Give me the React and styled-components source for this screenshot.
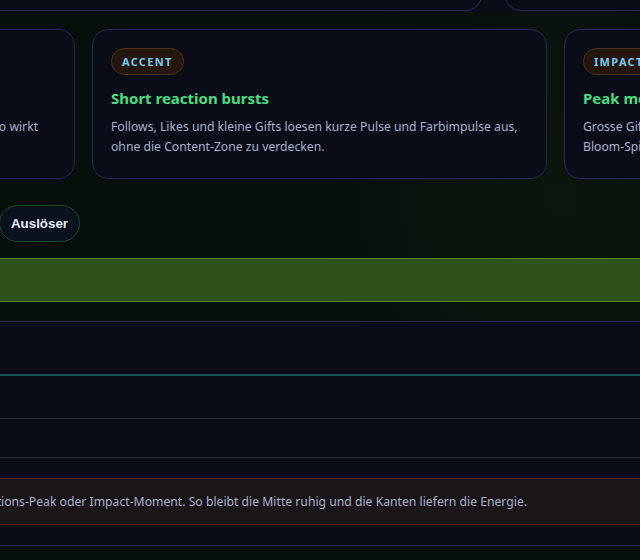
import React from "react";
import styled, { createGlobalStyle } from "styled-components";

const Global = createGlobalStyle`
  html, body { margin: 0; padding: 0; background: #070f0a; }
  body { overflow: hidden; font-family: "Noto Sans", "Open Sans", sans-serif; }
  * { box-sizing: border-box; }
`;

const Stage = styled.div`
  width: 640px;
  height: 560px;
  overflow: hidden;
  background:
    radial-gradient(circle at 560px 200px, rgba(30, 60, 30, 0.16), transparent 260px),
    #070f0a;
`;

const Page = styled.div`
  width: 1440px;
  margin: -30px 0 0 -400px;
  display: flex;
  flex-direction: column;
`;

const TopBand = styled.header`
  background: #0a0c18;
  padding: 0 20px 1px;
  display: grid;
  grid-template-columns: 862px 1fr;
  gap: 23px;
`;

const TopBox = styled.div`
  height: 41px;
  border: 1px solid #2c2658;
  border-top: none;
  border-radius: 0 0 16px 16px;
  background: #0a0c18;
`;

const CardGrid = styled.section`
  display: grid;
  grid-template-columns: repeat(3, 455px);
  gap: 17px;
  padding: 17px 20px 0;
`;

const Card = styled.article`
  height: 150px;
  border: 1px solid #2a2456;
  border-radius: 16px;
  background: #0a0c18;
  padding: 18px;
  display: flex;
  flex-direction: column;
  align-items: flex-start;
`;

const Badge = styled.span`
  display: inline-flex;
  align-items: center;
  height: 27px;
  padding: 0 10px;
  border-radius: 999px;
  border: 1px solid #51301a;
  background: #22160f;
  color: #7cc9ee;
  font: 700 11px/1 "Noto Sans", sans-serif;
  letter-spacing: 0.12em;
  text-transform: uppercase;
`;

const CardTitle = styled.h3`
  margin: 13px 0 0;
  font: 700 15px/20px "Noto Sans", sans-serif;
  color: #4ade80;
`;

const CardText = styled.p`
  margin: 9px 0 0;
  font: 400 12.2px/20px "Noto Sans", sans-serif;
  color: #a9b3cd;
`;

const TabRow = styled.nav`
  width: 460px;
  margin: 26px 0 0 20px;
  display: flex;
  justify-content: flex-end;
  gap: 8px;
`;

const Tab = styled.button`
  height: 37px;
  padding: 0 11px;
  border-radius: 999px;
  border: 1px solid #1f4b29;
  background: #0b111f;
  color: #e6eef8;
  font: 700 13.33px "Liberation Sans", Arial, sans-serif;
  cursor: pointer;
`;

const Bar = styled.div`
  margin-top: 16px;
  height: 44px;
  background: #2f5219;
  border-top: 1px solid #4d8a0e;
  border-bottom: 1px solid #4d8a0e;
`;

const Panel = styled.section`
  margin-top: 19px;
  background: #0a0d18;
  border-top: 1px solid #29284a;
  border-bottom: 1px solid #2b2850;
  padding: 0 20px 20px;
`;

const Row = styled.div`
  height: ${(p) => p.$h}px;
  border-bottom: ${(p) => p.$line};
`;

const Note = styled.div`
  margin-top: 20px;
  height: 47px;
  display: flex;
  align-items: center;
  padding: 0 36px;
  background: #1a1519;
  border: 1px solid #4a2a1c;
  border-left: none;
  border-right: none;
  font: 400 12.2px/20px "Noto Sans", sans-serif;
  color: #a9b3cd;
  white-space: nowrap;
`;

const cards = [
  {
    badge: "Ambient",
    title: "Calm base layer",
    text:
      "Weiche Glows und langsame Farbverlaeufe fliessen am Rand. So wirkt das Overlay lebendig, ohne zu stoeren.",
  },
  {
    badge: "Accent",
    title: "Short reaction bursts",
    text:
      "Follows, Likes und kleine Gifts loesen kurze Pulse und Farbimpulse aus, ohne die Content-Zone zu verdecken.",
  },
  {
    badge: "Impact",
    title: "Peak moments",
    text:
      "Grosse Gifts, Raids und Hype-Trains zuenden einen Vollbild-Flash mit Bloom-Spitzen an allen Kanten.",
  },
];

export default function App() {
  return (
    <Stage>
      <Global />
      <Page>
        <TopBand>
          <TopBox />
          <TopBox />
        </TopBand>
        <CardGrid>
          {cards.map((c) => (
            <Card key={c.badge}>
              <Badge>{c.badge}</Badge>
              <CardTitle>{c.title}</CardTitle>
              <CardText>{c.text}</CardText>
            </Card>
          ))}
        </CardGrid>
        <TabRow>
          <Tab>Übersicht</Tab>
          <Tab>Zonen</Tab>
          <Tab>Effekte</Tab>
          <Tab>Auslöser</Tab>
        </TabRow>
        <Bar />
        <Panel>
          <Row $h={54} $line="2px solid #17525f" />
          <Row $h={43} $line="1px solid #2a2f3d" />
          <Row $h={39} $line="1px solid #2a2f3d" />
          <Note>
            Volle Effekte feuern nur bei einem grossen Gift, einem Reaktions-Peak oder Impact-Moment. So bleibt die Mitte ruhig und die Kanten liefern die Energie.
          </Note>
        </Panel>
      </Page>
    </Stage>
  );
}
